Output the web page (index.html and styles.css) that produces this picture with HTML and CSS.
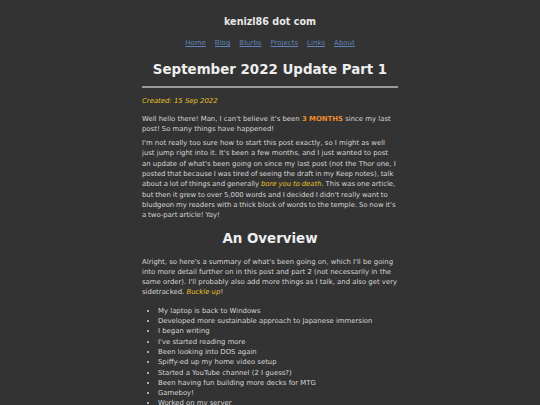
FILE: index.html
```html
<!DOCTYPE html>
<html>
<head>
<meta charset="utf-8">
<link rel="stylesheet" href="styles.css">
</head>
<body>
<div class="page">
  <header class="site-header">
    <div class="site-title">kenizl86 dot com</div>
    <nav class="nav">
      <a href="#">Home</a>
      <a href="#">Blog</a>
      <a href="#">Blurbs</a>
      <a href="#">Projects</a>
      <a href="#">Links</a>
      <a href="#">About</a>
    </nav>
  </header>
  <main class="post">
    <h1 class="post-title">September 2022 Update Part 1</h1>
    <hr class="rule">
    <p class="created">Created: 15 Sep 2022</p>
    <p>Well hello there! Man, I can't believe it's been <strong class="hot">3 MONTHS</strong> since my last post! So many things have happened!</p>
    <p>I'm not really too sure how to start this post exactly, so I might as well just jump right into it. It's been a few months, and I just wanted to post an update of what's been going on since my last post (not the Thor one, I <span class="tight">posted that because I was tired of seeing the draft in my Keep notes), talk about a lot of things and generally <em class="hl">bore you to death</em>. This was one article, but then it grew to over 5,000 words and I decided I didn't really want to bludgeon my readers with a thick block of words to the temple. So now it's a two-part article! Yay!</span></p>
    <h2 class="section">An Overview</h2>
    <p>Alright, so here's a summary of what's been going on, which I'll be going into more detail further on in this post and part 2 (not necessarily in the same order). I'll probably also add more things as I talk, and also get very sidetracked. <em class="hl">Buckle up</em>!</p>
    <ul class="list">
      <li>My laptop is back to Windows</li>
      <li>Developed more sustainable approach to Japanese immersion</li>
      <li>I began writing</li>
      <li>I've started reading more</li>
      <li>Been looking into DOS again</li>
      <li>Spiffy-ed up my home video setup</li>
      <li>Started a YouTube channel (2 I guess?)</li>
      <li>Been having fun building more decks for MTG</li>
      <li>Gameboy!</li>
      <li>Worked on my server</li>
    </ul>
  </main>
</div>
</body>
</html>
```
FILE: styles.css
```css
html, body {
  margin: 0;
  padding: 0;
  background: #333333;
}
body {
  font-family: "DejaVu Sans", Verdana, sans-serif;
  color: #d6d6d6;
  font-size: 6.9px;
  line-height: 10.3px;
}
.page {
  width: 256px;
  margin: 0 auto;
  padding-top: 15px;
}
.site-header {
  text-align: center;
}
.site-title {
  font-weight: bold;
  font-size: 9.6px;
  line-height: 14px;
  color: #e8e8e8;
}
.nav {
  display: flex;
  justify-content: center;
  gap: 9px;
  margin-top: 9px;
}
.nav a {
  color: #5f84b8;
  font-size: 7px;
  text-decoration: underline;
}
.post-title {
  font-size: 13.4px;
  line-height: 18px;
  text-align: center;
  margin: 13px 0 0;
  color: #eeeeee;
}
.rule {
  border: none;
  border-top: 2px solid #9a9a9a;
  margin: 7px 0 0;
}
.created {
  color: #e6c026;
  font-style: italic;
  margin: 8px 0 0;
}
p {
  margin: 4px 0 0;
}
.created + p {
  margin-top: 7px;
}
.tight {
  word-spacing: -0.35px;
}
.hot {
  color: #f08a2e;
}
.hl {
  color: #e6c026;
}
.section {
  font-size: 13.4px;
  line-height: 18px;
  text-align: center;
  margin: 9px 0 0;
  color: #eeeeee;
}
.section + p {
  margin-top: 9px;
}
.list {
  margin: 8px 0 0;
  padding-left: 16px;
}
```
